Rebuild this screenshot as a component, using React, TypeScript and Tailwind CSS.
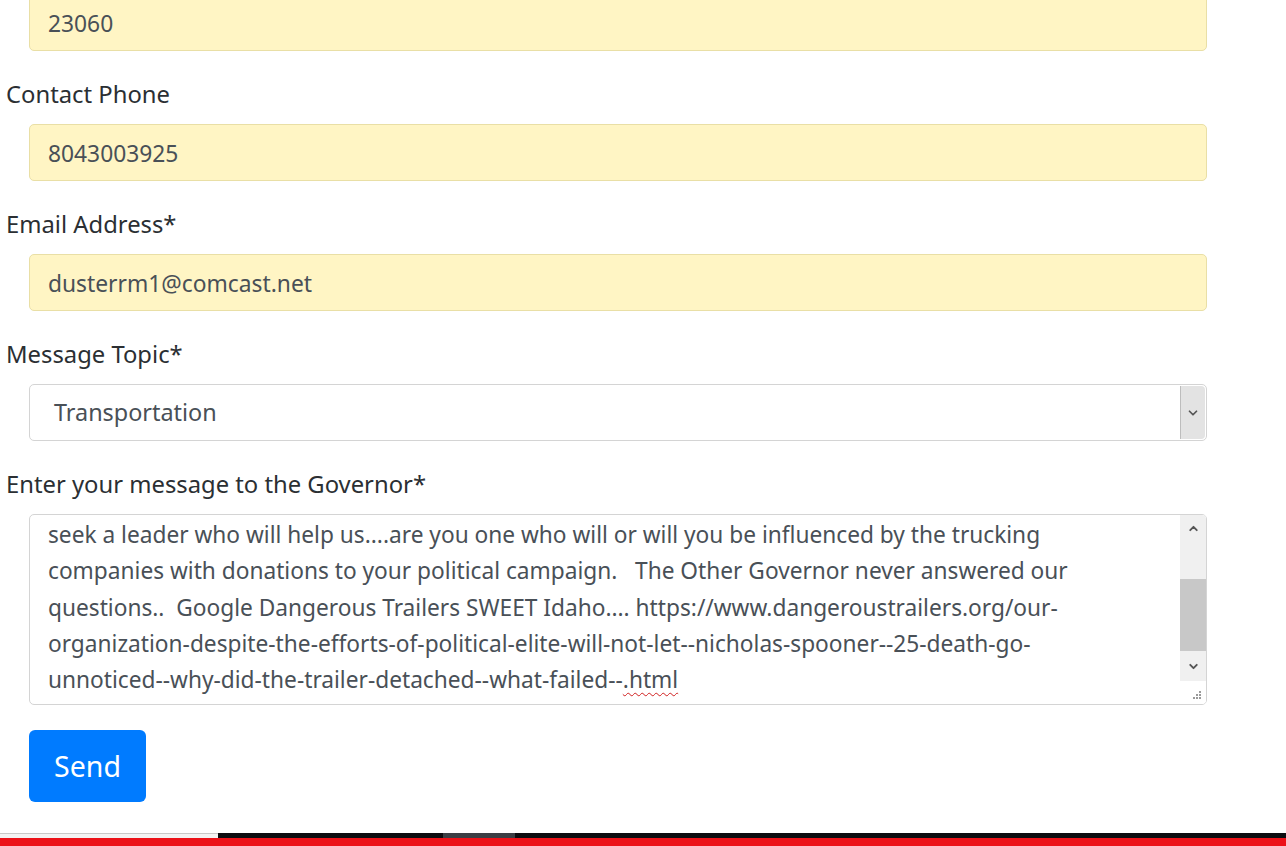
import { ChevronDown, ChevronUp } from "lucide-react";

const fields = [
  { label: "Contact Phone", value: "8043003925" },
  { label: "Email Address*", value: "dusterrm1@comcast.net" },
];

const messageLines = [
  "seek a leader who will help us....are you one who will or will you be influenced by the trucking",
  "companies with donations to your political campaign.\u00a0\u00a0 The Other Governor never answered our",
  "questions..\u00a0 Google Dangerous Trailers SWEET Idaho.... https://www.dangeroustrailers.org/our-",
  "organization-despite-the-efforts-of-political-elite-will-not-let--nicholas-spooner--25-death-go-",
];

function Label({ children }: { children: React.ReactNode }) {
  return (
    <div className="h-[30px] leading-[30px] pl-[6px] mt-[28px] mb-[15px] text-[23.8px] text-[#2b2f33]">
      {children}
    </div>
  );
}

function FilledInput({ value }: { value: string }) {
  return (
    <div className="h-[57px] rounded-[5px] border border-[#e9dfa6] bg-[#fff5c4] pl-[18px] pt-[3px] flex items-center text-[22.8px] text-[#495057]">
      {value}
    </div>
  );
}

export default function App() {
  return (
    <div
      className="relative h-[846px] w-[1286px] overflow-hidden bg-white"
      style={{ fontFamily: '"Noto Sans", "Open Sans", sans-serif' }}
    >
      <div className="pl-[29px] pr-[79px] -mt-[6px]">
        <FilledInput value="23060" />
      </div>

      {fields.map((f) => (
        <div key={f.label}>
          <Label>{f.label}</Label>
          <div className="pl-[29px] pr-[79px]">
            <FilledInput value={f.value} />
          </div>
        </div>
      ))}

      <Label>Message Topic*</Label>
      <div className="pl-[29px] pr-[79px]">
        <div className="h-[57px] rounded-[5px] border border-[#d4d4d4] bg-white flex items-stretch text-[23.4px] text-[#495057]">
          <div className="flex-1 flex items-center pl-[24px] pt-[1px]">Transportation</div>
          <div className="w-[25px] my-[1px] mr-[1px] border-l border-[#bdbdbd] bg-[#e3e3e3] rounded-r-[4px] flex items-center justify-center">
            <ChevronDown className="h-[14px] w-[14px] text-[#555]" strokeWidth={3} />
          </div>
        </div>
      </div>

      <Label>Enter your message to the Governor*</Label>
      <div className="pl-[29px] pr-[79px]">
        <div className="relative h-[191px] rounded-[5px] border border-[#d4d4d4] bg-white overflow-hidden">
          <div className="pl-[18px] pt-[2px] text-[22.7px] leading-[36.25px] text-[#495057] whitespace-nowrap">
            {messageLines.map((l) => (
              <div key={l}>{l}</div>
            ))}
            <div>
              unnoticed--why-did-the-trailer-detached--what-failed--
              <span className="underline decoration-wavy decoration-[#d02020] decoration-1 underline-offset-[4px]">.html</span>
            </div>
          </div>
          <div className="absolute right-0 top-0 bottom-0 w-[26px] bg-white">
            <div className="h-[166px] bg-[#f0f0f0] flex flex-col">
              <div className="h-[26px] flex items-center justify-center">
                <ChevronUp className="h-[13px] w-[13px] text-[#555]" strokeWidth={3.5} />
              </div>
              <div className="h-[38px]" />
              <div className="h-[72px] bg-[#c8c8c8]" />
              <div className="flex-1 flex items-center justify-center">
                <ChevronDown className="h-[13px] w-[13px] text-[#555]" strokeWidth={3.5} />
              </div>
            </div>
            <svg className="absolute right-[4px] bottom-[4px]" width="10" height="10" viewBox="0 0 10 10">
              <g fill="#9a9a9a">
                <rect x="7" y="1" width="2" height="2" />
                <rect x="4" y="4" width="2" height="2" />
                <rect x="7" y="4" width="2" height="2" />
                <rect x="1" y="7" width="2" height="2" />
                <rect x="4" y="7" width="2" height="2" />
                <rect x="7" y="7" width="2" height="2" />
              </g>
            </svg>
          </div>
        </div>
      </div>

      <div className="pl-[29px] mt-[25px]">
        <button className="h-[72px] w-[117px] rounded-[6px] bg-[#007bff] text-white text-[28.5px]">
          Send
        </button>
      </div>

      <div className="absolute left-0 right-0 bottom-0">
        <div className="flex h-[5px]">
          <div className="w-[218px] border-t border-[#c8c8c8] bg-[#f3f3f3]" />
          <div className="w-[225px] bg-[#0c0c10]" />
          <div className="w-[72px] bg-[#3b3e44]" />
          <div className="flex-1 bg-[#0c0c10]" />
        </div>
        <div className="h-[8px] bg-[#ec1118]" />
      </div>
    </div>
  );
}
